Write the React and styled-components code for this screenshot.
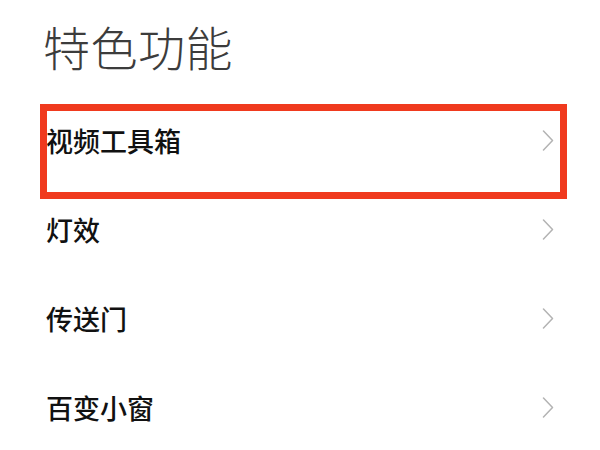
import React from "react"
import styled, { createGlobalStyle } from "styled-components"

const GlobalStyle = createGlobalStyle`
  html, body {
    margin: 0;
    padding: 0;
    background: #ffffff;
  }
  body {
    font-family: "Noto Sans CJK SC", "Noto Sans", sans-serif;
  }
`

const Page = styled.div`
  width: 600px;
  height: 450px;
  overflow: hidden;
  background: #ffffff;
  display: flex;
  flex-direction: column;
`

const Title = styled.h1`
  margin: 22px 0 0 0;
  padding-left: 43px;
  font-size: 47px;
  line-height: 47px;
  font-weight: 300;
  color: #3c3c3c;
  letter-spacing: 0.5px;
`

const List = styled.div`
  margin-top: 27px;
  display: flex;
  flex-direction: column;
`

const Row = styled.div`
  position: relative;
  height: 89px;
  padding: 0 46px;
  display: flex;
  align-items: center;
  justify-content: space-between;
`

const Label = styled.span`
  font-size: 27px;
  line-height: 1;
  font-weight: 500;
  color: #111111;
`

// red annotation frame drawn over the first row
const Highlight = styled.div`
  position: absolute;
  top: 8px;
  left: -6px;
  right: -13px;
  bottom: -14px;
  margin: 0 46px;
  border: 7px solid #f03a1e;
  pointer-events: none;
`

const Chevron = () => (
  <svg width="12" height="21" viewBox="0 0 12 21" fill="none">
    <polyline points="1.5,1 10.5,10.5 1.5,20" stroke="#b3b3b3" strokeWidth="1.5" strokeLinecap="round" strokeLinejoin="round" />
  </svg>
)

const items = ["视频工具箱", "灯效", "传送门", "百变小窗"]

export default function App() {
  return (
    <>
      <GlobalStyle />
      <Page>
        <Title>特色功能</Title>
        <List>
          {items.map((name, i) => (
            <Row key={name}>
              <Label>{name}</Label>
              <Chevron />
              {i === 0 && <Highlight />}
            </Row>
          ))}
        </List>
      </Page>
    </>
  )
}
